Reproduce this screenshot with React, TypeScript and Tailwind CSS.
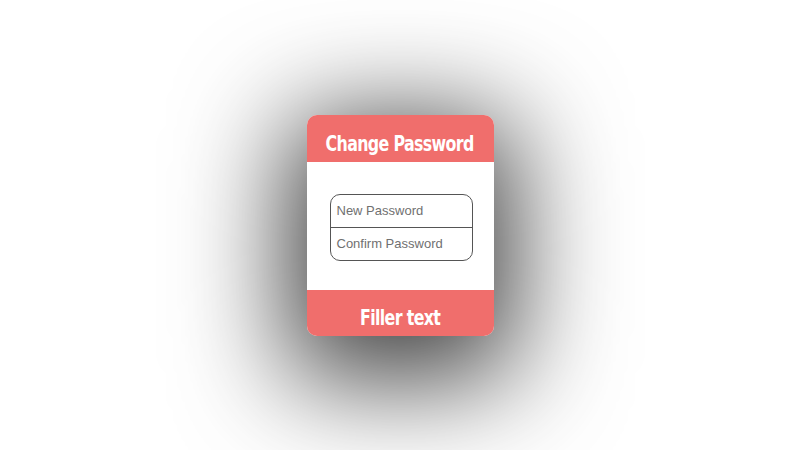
export default function App() {
  const heading = { fontFamily: '"DejaVu Sans", sans-serif', fontStretch: 'condensed' } as const;
  return (
    <div className="w-[800px] h-[450px] bg-white flex items-center justify-center overflow-hidden">
      <div className="w-[187px] rounded-[10px] overflow-hidden bg-white flex flex-col shadow-[0_24px_110px_20px_rgba(0,0,0,0.75)]">
        <div className="h-[47px] bg-[#f06e6c] flex items-center justify-center pt-[10px]">
          <span className="inline-block text-white text-[22px] font-bold tracking-[-0.8px] whitespace-nowrap scale-x-[0.8]" style={heading}>
            Change Password
          </span>
        </div>
        <div className="h-[128px] flex items-center justify-center pt-[4px] pl-[2px]">
          <div className="w-[143px] h-[67px] border border-[#555] rounded-[10px] flex flex-col" style={{ fontFamily: '"Liberation Sans", Arial, sans-serif' }}>
            <div className="flex-1 border-b border-[#555] flex items-center pl-[6px] text-[13px] text-[#707070]">New Password</div>
            <div className="flex-1 flex items-center pl-[6px] text-[13px] text-[#707070]">Confirm Password</div>
          </div>
        </div>
        <div className="h-[46px] bg-[#f06e6c] flex items-center justify-center pt-[10px]">
          <span className="inline-block text-white text-[22px] font-bold tracking-[-0.8px] whitespace-nowrap scale-x-[0.8]" style={heading}>
            Filler text
          </span>
        </div>
      </div>
    </div>
  );
}
